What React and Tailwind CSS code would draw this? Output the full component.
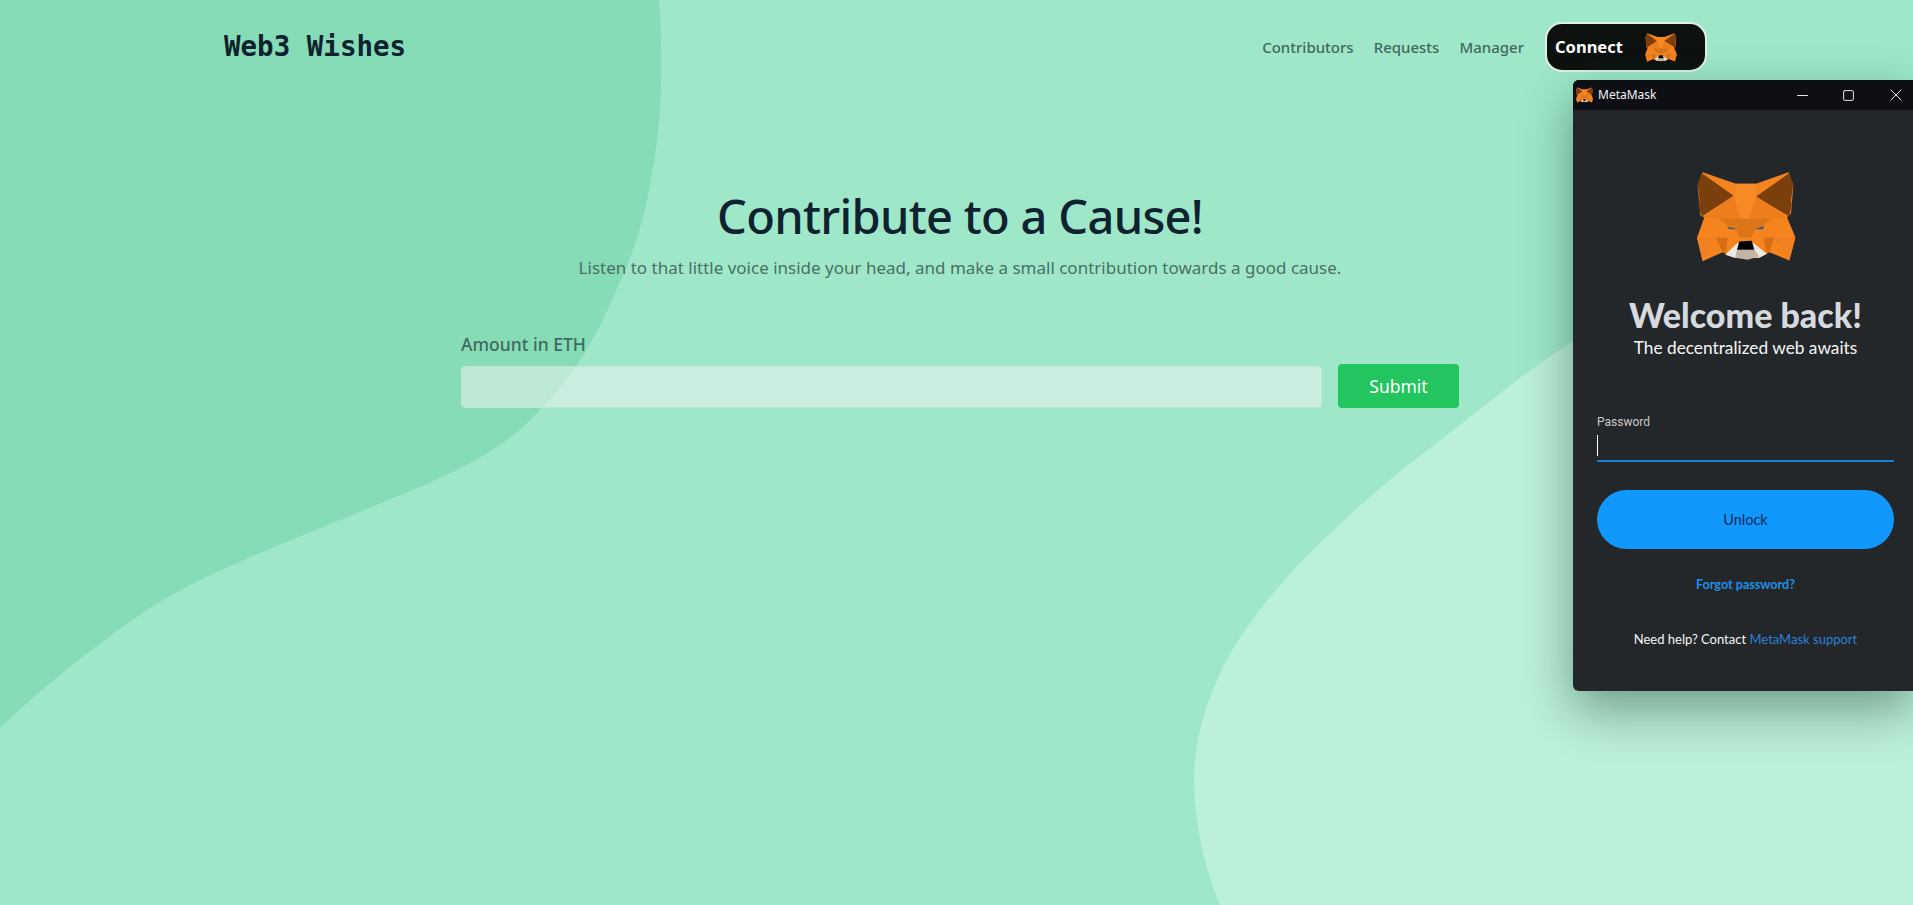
import React from "react";
import { Minus, Square, X } from "lucide-react";

const facets = [
  // head base
  ["#f5841f", "125,65 225,100 285,100 382,65 397,105 390,190 378,200 403,260 385,330 325,305 295,322 220,322 185,305 125,332 108,262 130,200 118,195 110,105"],
  // ears
  ["#7a3f0a", "125,70 218,136 122,198 112,160 116,150 110,100"],
  ["#7a3f0a", "382,70 285,138 385,198 392,160 390,150 397,100"],
  // forehead shading
  ["#ee7d1c", "218,136 240,205 175,205 130,200"],
  ["#ee7d1c", "285,138 265,205 335,205 378,200"],
  ["#f68a24", "225,100 285,100 285,138 265,205 240,205 218,136"],
  ["#dc7418", "175,205 335,205 305,225 280,238 272,260 236,260 228,238 200,225"],
  // cheeks
  ["#f08020", "108,262 165,262 125,332"],
  ["#f08020", "403,262 340,262 385,330"],
  ["#d96f14", "165,262 200,262 195,305 185,305"],
  ["#d96f14", "340,262 308,262 315,305 325,305"],
  // eyes
  ["#3a5872", "198,228 230,236 205,236"],
  ["#3a5872", "310,226 282,236 305,236"],
  // muzzle
  ["#ece8e2", "193,313 228,278 278,278 318,310 295,322 220,322"],
  ["#c4b5a8", "228,298 280,298 295,318 260,328 222,322"],
  ["#000000", "235,273 272,271 280,298 228,298"],
];

function Fox({ className }) {
  return (
    <svg viewBox="105 62 300 272" className={className}>
      {facets.map(([fill, points], i) => (
        <polygon key={i} fill={fill} points={points} />
      ))}
    </svg>
  );
}

function MetaMaskWindow() {
  return (
    <div className="absolute left-[1573px] top-[80px] w-[340px] h-[611px] rounded-l-md overflow-hidden bg-[#24272a] shadow-[0_18px_50px_rgba(20,50,40,0.45)] font-['Lato',sans-serif]">
      <div className="flex items-center h-[30px] bg-[#0e0f14] pl-[3px] pr-[11px]">
        <Fox className="w-[17px] h-[16px]" />
        <span className="ml-[5px] text-[12px] text-[#f2f2f2] font-['Noto_Sans',sans-serif]">MetaMask</span>
        <div className="ml-auto flex items-center gap-[31px] text-[#e8e8e8]">
          <Minus size={17} strokeWidth={1} absoluteStrokeWidth />
          <Square size={13} strokeWidth={1} absoluteStrokeWidth />
          <X size={20} strokeWidth={1} absoluteStrokeWidth className="-mr-[4px]" />
        </div>
      </div>
      <div className="flex flex-col pl-[24px] pr-[19px]">
        <div className="mt-[61px] flex justify-center">
          <Fox className="w-[100px] h-[91px]" />
        </div>
        <h2 className="mt-[33px] text-center text-[34px] leading-[40px] font-black text-[#d6dadf]">Welcome back!</h2>
        <p className="mt-px text-center text-[17.3px] leading-[24px] text-[#f4f6f6]">The decentralized web awaits</p>
        <label className="mt-[54px] text-[12px] leading-[16px] text-[#c9c9c9] font-['Roboto',sans-serif]">Password</label>
        <div className="h-[32px] border-b-2 border-[#1a82dc] pt-[5px]">
          <div className="w-px h-[21px] bg-white"></div>
        </div>
        <button className="mt-[28px] h-[59px] rounded-full bg-[#1098fc] text-[14.5px] text-[#0b2c52]">Unlock</button>
        <a href="#" className="mt-[28px] text-center text-[12.6px] leading-[16px] font-bold text-[#1f8fe6]">Forgot password?</a>
        <p className="mt-[38px] text-center text-[13px] leading-[16px] text-[#f4f6f6]">
          Need help? Contact <a href="#" className="text-[#2a80d8]">MetaMask support</a>
        </p>
      </div>
    </div>
  );
}

function App() {
  return (
    <div className="relative w-[1913px] h-[905px] overflow-hidden bg-[#9ee8c9] font-['Noto_Sans',sans-serif]">
      <svg viewBox="0 0 1913 905" className="absolute inset-0 w-full h-full">
        <path fill="#86dcb6" d="M0,0 L659,0 C664,70 662,130 647,200 C640,235 628,265 612,300 C590,350 565,388 522,428 C480,465 420,487 357,513 C270,549 200,575 147,610 C95,645 45,685 0,728 Z" />
        <path fill="#bbf0d9" d="M1913,130 L1573,341 C1530,368 1490,402 1447,435 C1400,470 1355,508 1313,550 C1280,582 1245,625 1223,667 C1205,705 1194,740 1194,781 C1195,825 1205,870 1220,905 L1913,905 Z" />
      </svg>

      <div className="relative">
        <header className="flex items-center justify-between pl-[224px] pr-[206px] pt-[22px]">
          <a href="#" className="font-['DejaVu_Sans_Mono',monospace] text-[27.5px] font-bold text-[#0f2230] -mt-[1px]">Web3 Wishes</a>
          <nav className="flex items-center gap-[20px] text-[15px] font-medium text-[#3f6a60]">
            <a href="#">Contributors</a>
            <a href="#">Requests</a>
            <a href="#" className="mr-px">Manager</a>
            <button className="flex items-center h-[50px] w-[162px] pl-[8px] rounded-[17px] border-2 border-[#dff0ea] bg-[#0d1210] text-[16.5px] font-bold text-white">
              Connect
              <Fox className="ml-[22px] w-[32px] h-[29px]" />
            </button>
          </nav>
        </header>

        <main className="w-[998px] ml-[461px] mt-[114px] flex flex-col">
          <h1 className="text-center text-[47px] leading-[60px] tracking-[-0.7px] font-medium text-[#0f2230]">Contribute to a Cause!</h1>
          <p className="mt-[8px] text-center text-[17px] leading-[28px] text-[#4a6f66]">
            Listen to that little voice inside your head, and make a small contribution towards a good cause.
          </p>
          <label className="mt-[50px] text-[17.5px] leading-[24px] font-medium text-[#3f6a60]">Amount in ETH</label>
          <div className="mt-[8px] flex items-end gap-[16px]">
            <input className="flex-1 h-[42px] rounded border border-[#bfe6d6] bg-gray-100/50" />
            <button className="w-[121px] h-[44px] rounded bg-[#22c55e] text-[17.5px] text-white">Submit</button>
          </div>
        </main>
      </div>

      <MetaMaskWindow />
    </div>
  );
}

export default App;
